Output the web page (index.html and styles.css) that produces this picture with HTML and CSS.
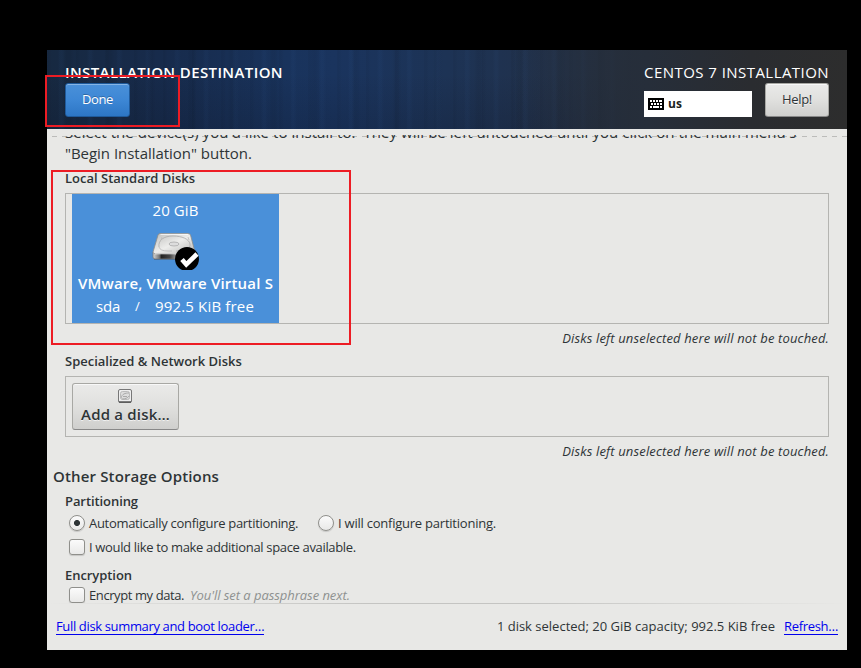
FILE: index.html
```html
<!DOCTYPE html>
<html lang="en">
<head>
<meta charset="utf-8">
<title>Installation Destination</title>
<link rel="stylesheet" href="styles.css">
</head>
<body>
<main class="window">
  <header class="header">
    <div class="header-left">
      <h1 class="title">INSTALLATION DESTINATION</h1>
      <button class="btn btn-done">Done</button>
    </div>
    <div class="header-right">
      <div class="product">CENTOS 7 INSTALLATION</div>
      <div class="header-tools">
        <div class="keyboard">
          <svg width="16" height="12" viewBox="0 0 16 12" shape-rendering="crispEdges">
            <rect width="16" height="12" rx="1" fill="#000"/>
            <path stroke="#fff" stroke-width="2" fill="none" d="M2 3h2M5 3h2M8 3h2M11 3h3M3 6h2M6 6h2M9 6h2M12 6h2M2 9h2M5 9h6M12 9h2"/>
          </svg>
          <span>us</span>
        </div>
        <button class="btn btn-help">Help!</button>
      </div>
    </div>
  </header>

  <div class="scroll">
    <p class="intro"><span class="intro-a">Select the device(s) you'd like to install to.&nbsp; They will be left untouched until you click on the main menu's</span><br><span class="intro-b">"Begin Installation" button.</span></p>

    <section class="disks">
      <h2 class="label">Local Standard Disks</h2>
      <div class="box box-local">
        <div class="disk">
          <div class="disk-size">20 GiB</div>
          <svg class="disk-icon" width="50" height="40" viewBox="0 0 50 40">
            <defs>
              <linearGradient id="top" x1="0" y1="0" x2="1" y2="1"><stop offset="0" stop-color="#bdbdbb"/><stop offset=".5" stop-color="#ededeb"/><stop offset="1" stop-color="#b5b5b3"/></linearGradient>
              <linearGradient id="front" x1="0" y1="0" x2="1" y2="0"><stop offset="0" stop-color="#d8d8d6"/><stop offset=".15" stop-color="#777"/><stop offset=".2" stop-color="#222"/><stop offset=".4" stop-color="#444"/><stop offset=".55" stop-color="#999"/><stop offset="1" stop-color="#ddd"/></linearGradient>
            </defs>
            <path d="M4 28h40v2H4z" fill="#24507f" opacity=".5"/>
            <path d="M3 22h42v5q0 2-2 2H5q-2 0-2-2z" fill="url(#front)" stroke="#777" stroke-width=".8"/>
            <path d="M10 3.500h28q2 0 2.500 1.500L45 22q0 1.500-1.500 1.500h-39Q3 23.500 3 22L8 5q.5-1.500 2-1.500z" fill="url(#top)" stroke="#8b8b89" stroke-width=".8"/>
            <path d="M10.500 4.400h27.500" stroke="#fff" stroke-width=".8"/>
            <path d="M9 17C8 10 14 6 23 6s16 3 17 8-6 7-14 7" fill="none" stroke="#aaa" stroke-width=".8"/>
            <path d="M9 17q1 4 9 4h4M12 7l-1 3M38 7l1 3" fill="none" stroke="#bbb" stroke-width=".8"/>
            <ellipse cx="24" cy="14" rx="5" ry="2" fill="#ddd" stroke="#aaa" stroke-width=".8"/>
            <path d="M5 23.800h38" stroke="#fff" stroke-width=".8"/>
            <circle cx="37" cy="29" r="12" fill="#000"/>
            <path d="M32 29.500l4.300 5L47 24" fill="none" stroke="#fff" stroke-width="4.600"/>
          </svg>
          <div class="disk-name">VMware, VMware Virtual S</div>
          <div class="disk-info"><span class="dev">sda</span><span class="slash">/</span><span class="free">992.5 KiB free</span></div>
        </div>
      </div>
      <p class="note">Disks left unselected here will not be touched.</p>

      <h2 class="label label-net">Specialized &amp; Network Disks</h2>
      <div class="box box-net">
        <button class="btn btn-add">
          <svg width="14" height="14" viewBox="0 0 14 14">
            <rect x=".5" y=".5" width="13" height="13" rx="1.500" fill="#eee" stroke="#777"/>
            <path d="M1 13h12" stroke="#555" stroke-width="1.500"/>
            <rect x="2.500" y="2.500" width="9" height="8" rx="2" fill="#ddd" stroke="#bbb"/>
            <path d="M3 9c1-4 4-5 8-5M5 7.500h4M4 10c3 0 6-1 7-3" stroke="#aaa" fill="none"/>
          </svg>
          <span>Add a disk…</span>
        </button>
      </div>
      <p class="note">Disks left unselected here will not be touched.</p>
    </section>

    <section class="options">
      <h2 class="options-title">Other Storage Options</h2>
      <h3 class="label label-part">Partitioning</h3>
      <div class="row">
        <span class="radio radio-on"></span><span class="auto">Automatically configure partitioning.</span>
        <span class="radio"></span><span class="manual">I will configure partitioning.</span>
      </div>
      <div class="row row-space"><span class="check"></span><span class="space">I would like to make additional space available.</span></div>
      <h3 class="label label-enc">Encryption</h3>
      <div class="row row-enc"><span class="check"></span><span class="encrypt">Encrypt my data.</span><em class="hint">You'll set a passphrase next.</em></div>
    </section>
  </div>

  <footer class="footer">
    <a class="summary">Full disk summary and boot loader…</a>
    <span class="status">1 disk selected; 20 GiB capacity; 992.5 KiB free</span>
    <a class="refresh">Refresh…</a>
  </footer>
</main>
<div class="mark mark-done"></div>
<div class="mark mark-disk"></div>
</body>
</html>
```
FILE: styles.css
```css
* { box-sizing: border-box; }
body {
  margin: 0;
  height: 668px;
  padding: 50px 0 0 47px;
  overflow: hidden;
  background: #000;
  color: #2e3436;
  font: 13px/20px "Open Sans", "Noto Sans", sans-serif;
}
h1, h2, h3, p { margin: 0; }
svg { display: block; }
button { font: inherit; color: inherit; }

.window {
  width: 800px;
  height: 600px;
  display: flex;
  flex-direction: column;
  background: #e8e8e6;
}

.header {
  height: 79px;
  flex: none;
  padding: 12px 18px 0;
  display: flex;
  justify-content: space-between;
  color: #fff;
  font-size: 15px;
  background:
    linear-gradient(90deg, transparent 58%, #262e3a 75%, #2a2c30 88%, #2d2d2d),
    repeating-linear-gradient(90deg, rgba(0,0,0,.04) 0 2px, transparent 5px 11px, rgba(60,110,180,.05) 13px 15px, transparent 18px 29px),
    repeating-linear-gradient(90deg, transparent 0 17px, rgba(0,0,0,.05) 20px 23px, transparent 27px 41px),
    linear-gradient(180deg, transparent 30%, rgba(10,15,30,.18)),
    linear-gradient(90deg, #172941 0, #172b4c 15%, #19335c 30%, #1a345e 36%, #1d3355 50%, #21314b 63%, #252e3c 75%);
}
.title { font-size: 15px; font-weight: 600; line-height: 21px; letter-spacing: .39px; }
.product { line-height: 21px; letter-spacing: .45px; white-space: nowrap; }
.header-right { width: 185px; }
.header-tools { display: flex; justify-content: space-between; align-items: flex-end; }
.keyboard {
  width: 108px;
  height: 26px;
  padding: 0 4px;
  display: flex;
  align-items: center;
  gap: 4px;
  background: #fff;
  color: #1b1f20;
  font-size: 12px;
  font-weight: 700;
}

.btn {
  display: block;
  padding: 0 0 2px;
  border: 1px solid #a8a8a4;
  border-bottom-color: #888;
  border-radius: 3px;
  background: linear-gradient(#eaeae9, #e0e0de 50%, #cfcfcd);
  box-shadow: inset 0 1px #f8f8f8;
  color: #2e3436;
  text-shadow: 0 1px rgba(255,255,255,.7);
}
.btn-done {
  width: 65px;
  height: 34px;
  border-color: #1f5a9b;
  background: linear-gradient(#4a90d9, #3d87d5 50%, #2d76c5);
  box-shadow: inset 0 1px #84b4e6;
  color: #fff;
  text-shadow: 0 -1px rgba(0,0,0,.25);
  font-size: 13px;
  letter-spacing: -.38px;
}
.btn-help { width: 64px; height: 34px; font-size: 13px; letter-spacing: -.31px; }

.scroll {
  height: 468px;
  margin-top: 6px;
  padding: 0 18px;
  overflow: hidden;
  background: repeating-linear-gradient(90deg, transparent 0 5px, #bcbcba 5px 10px) 0 1px / 100% 1px no-repeat;
}
.intro { margin-top: -13px; font-size: 15px; line-height: 21px; white-space: nowrap; }
.intro-a { letter-spacing: .05px; }
.intro-b { letter-spacing: -.03px; }
.label { font-size: 13px; font-weight: 600; line-height: 20px; }
.disks .label { margin-top: 4px; }
.disks .label-net { margin-top: 2px; }
.box { border: 1px solid #b4b4b1; padding: 0 6px; }
.box-local { height: 131px; margin-top: 5px; }
.box-net { height: 61px; margin-top: 5px; padding-top: 6px; }
.disk {
  width: 207px;
  height: 129px;
  padding-top: 6px;
  background: #4a90d9;
  color: #fff;
  text-align: center;
  font-size: 15px;
  line-height: 20px;
}
.disk-size { letter-spacing: .09px; }
.disk-icon { margin: 10px 0 0 78px; }
.disk-name { margin-top: 3px; font-weight: 600; letter-spacing: .18px; white-space: nowrap; }
.disk-info { margin-top: 3px; padding-left: 24px; display: flex; }
.dev { width: 39px; text-align: left; letter-spacing: -.22px; }
.slash { width: 20px; text-align: left; font-size: 13px; }
.free { letter-spacing: .16px; }
.note { margin-top: 4px; line-height: 21px; text-align: right; font-style: italic; letter-spacing: .15px; }
.btn-add {
  width: 107px;
  height: 47px;
  display: flex;
  flex-direction: column;
  align-items: center;
  padding: 5px 1px 0 0;
  font-size: 15px;
  font-weight: 600;
  line-height: 20px;
  letter-spacing: .2px;
}
.btn-add span { margin: 1px -1px 0 0; }

.options-title { margin: 4px 0 0 -12px; font-size: 15px; font-weight: 600; line-height: 21px; letter-spacing: .15px; }
.label-part { margin-top: 4px; letter-spacing: -.08px; }
.row { height: 20px; margin-top: 2px; padding-left: 4px; display: flex; align-items: center; white-space: nowrap; }
.row-space { margin-top: 4px; }
.label-enc { margin-top: 8px; letter-spacing: -.06px; }
.row-enc { margin-top: 0; }
.radio, .check {
  width: 16px;
  height: 16px;
  flex: none;
  margin-right: 4px;
  border: 1px solid #8f8f8b;
  background: linear-gradient(#fbfbfb, #e9e9e8);
  box-shadow: 0 1px 1px rgba(0,0,0,.15);
}
.radio { border-radius: 50%; }
.check { border-radius: 3px; }
.radio-on { background: radial-gradient(circle, #2e3436 0 2.7px, transparent 3.3px), linear-gradient(#fbfbfb, #e9e9e8); }
.auto { width: 229px; letter-spacing: -.3px; }
.manual { letter-spacing: -.23px; }
.space { letter-spacing: -.34px; }
.encrypt { width: 101px; letter-spacing: -.41px; }
.hint { color: #8e9190; letter-spacing: -.05px; }

.footer {
  height: 47px;
  padding: 0 9px;
  display: flex;
  align-items: center;
  white-space: nowrap;
  background: linear-gradient(90deg, transparent, #c4c4c2 40%, #c4c4c2 60%, transparent) 0 0 / 100% 1px no-repeat;
}
.footer a { color: #00e; border-bottom: 1px solid #00e; line-height: 15px; }
.summary { letter-spacing: -.35px; }
.status { margin-left: auto; padding-bottom: 2px; }
.refresh { margin-left: 9px; letter-spacing: -.32px; }

/* Red highlight frames drawn over the window */
.mark { position: absolute; border: 2px solid #ed1c24; }
.mark-done { left: 45px; top: 75px; width: 135px; height: 52px; }
.mark-disk { left: 51px; top: 170px; width: 300px; height: 175px; }
```
